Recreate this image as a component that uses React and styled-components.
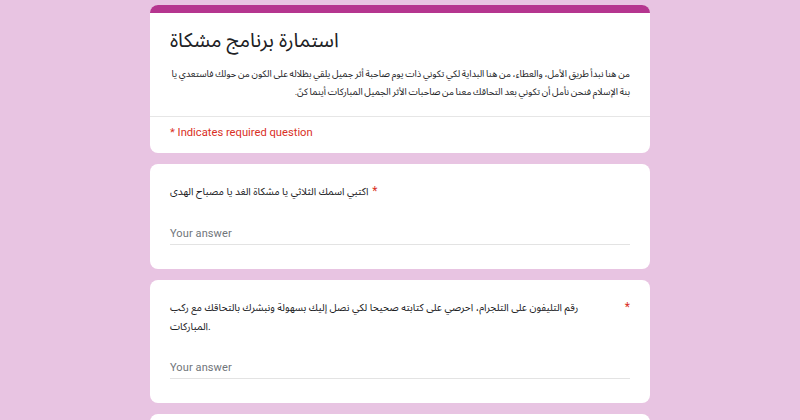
import React from "react";
import styled, { createGlobalStyle } from "styled-components";

const Global = createGlobalStyle`
  html, body { margin: 0; padding: 0; }
  body {
    background: #e8c4e2;
    font-family: Roboto, "Noto Sans Arabic", "DejaVu Sans", sans-serif;
    color: #202124;
  }
`;

const Page = styled.div`
  width: 500px;
  margin: 0 auto;
  padding-top: 5px;
  display: flex;
  flex-direction: column;
  gap: 11px;
`;

const Card = styled.div`
  background: #fff;
  border-radius: 8px;
  overflow: hidden;
  direction: ltr;
  text-align: left;
`;

const Bar = styled.div`
  height: 8px;
  background: #b5358f;
`;

const Header = styled.div`
  padding: 11px 20px 15px 20px;
`;

const Title = styled.div`
  font-size: 20px;
  line-height: 32px;
  color: #202124;
`;

const Description = styled.div`
  margin-top: 9px;
  direction: rtl;
  text-align: right;
  font-size: 9.4px;
  line-height: 18px;
  word-spacing: -0.6px;
  color: #202124;
`;

const Divider = styled.div`
  height: 1px;
  background: #e6e6e6;
`;

const Required = styled.div`
  padding: 7px 20px 11px 20px;
  font-size: 11.2px;
  line-height: 18px;
  color: #d93025;
`;

const QuestionCard = styled(Card)`
  padding: 18px 20px 24px 20px;
`;

const QTitle = styled.div`
  display: flex;
  align-items: flex-start;
  gap: 4px;
  font-size: 10.2px;
  line-height: 19px;
  color: #202124;
`;

const QText = styled.span`
  flex: 0 1 auto;
`;

const Star = styled.span`
  flex: none;
  color: #d93025;
  font-size: 12px;
`;

const Answer = styled.div`
  margin-top: ${(p) => p.$gap}px;
  height: 21px;
  border-bottom: 1px solid #e3e3e3;
  font-size: 11px;
  line-height: 21px;
  color: #70757a;
  letter-spacing: 0.1px;
`;

const Stub = styled(Card)`
  height: 40px;
`;

export default function App() {
  return (
    <>
      <Global />
      <Page>
        <Card>
          <Bar />
          <Header>
            <Title>استمارة برنامج مشكاة</Title>
            <Description>
              من هنا نبدأ طريق الأمل، والعطاء، من هنا البداية لكي تكوني ذات يوم صاحبة أثر جميل يلقي بظلاله على الكون من حولك فاستعدي يا بنة الإسلام فنحن نأمل أن تكوني بعد التحاقك معنا من صاحبات الأثر الجميل المباركات أينما كنّ.
            </Description>
          </Header>
          <Divider />
          <Required>* Indicates required question</Required>
        </Card>

        <QuestionCard>
          <QTitle>
            <QText>اكتبي اسمك الثلاثي يا مشكاة الغد يا مصباح الهدى</QText>
            <Star>*</Star>
          </QTitle>
          <Answer $gap={22}>Your answer</Answer>
        </QuestionCard>

        <QuestionCard>
          <QTitle>
            <QText>
              رقم التليفون على التلجرام، احرصي على كتابته صحيحا لكي نصل إليك بسهولة ونبشرك بالتحاقك مع ركب المباركات.
            </QText>
            <Star>*</Star>
          </QTitle>
          <Answer $gap={21}>Your answer</Answer>
        </QuestionCard>

        <Stub />
      </Page>
    </>
  );
}
